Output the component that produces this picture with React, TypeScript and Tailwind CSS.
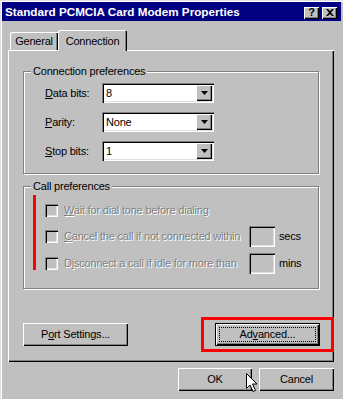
import React from 'react'

const raised =
  'bg-[#c0c0c0] shadow-[inset_1px_1px_#fff,inset_-1px_-1px_#000,inset_-2px_-2px_#808080]'
const sunken =
  'shadow-[inset_1px_1px_#808080,inset_2px_2px_#000,inset_-1px_-1px_#fff,inset_-2px_-2px_#dfdfdf]'
const etched = 'border border-[#808080] shadow-[inset_1px_1px_#fff,1px_1px_#fff]'
const disabledText = 'text-[#808080] [text-shadow:1px_1px_0_#fff]'

function DropArrow() {
  return (
    <svg width="7" height="4" viewBox="0 0 7 4">
      <polygon points="0,0 7,0 3.5,4" fill="#000" />
    </svg>
  )
}

function Select({ value }: { value: string }) {
  return (
    <div className={`flex h-[20px] w-[112px] items-center bg-white pl-[4px] ${sunken}`}>
      <span className="flex-1 leading-none">{value}</span>
      <div className={`mr-[2px] flex h-[16px] w-[16px] items-center justify-center ${raised}`}>
        <DropArrow />
      </div>
    </div>
  )
}

function Row({ label, u, value }: { label: string; u: string; value: string }) {
  return (
    <div className="flex h-[20px] items-center">
      <span className="w-[57px]">
        <u>{u}</u>
        {label}
      </span>
      <Select value={value} />
    </div>
  )
}

function Check() {
  return <div className={`h-[13px] w-[13px] shrink-0 bg-[#c0c0c0] ${sunken}`} />
}

function Group({ title, className, children }: { title: string; className?: string; children: React.ReactNode }) {
  return (
    <div className={`relative h-[103px] w-[296px] ${etched} ${className ?? ''}`}>
      <span className="absolute -top-[8px] left-[7px] bg-[#c0c0c0] px-[2px] leading-[14px]">{title}</span>
      {children}
    </div>
  )
}

function Cursor() {
  return (
    <svg className="absolute left-[246px] top-[373px]" width="12" height="19" viewBox="0 0 12 19">
      <path
        d="M0.5 0.5 L0.5 15.5 L4 12 L7 18.5 L9.5 17.5 L6.5 11 L11 11 Z"
        fill="#fff"
        stroke="#000"
        strokeWidth="1"
        strokeLinejoin="miter"
      />
    </svg>
  )
}

export default function App() {
  return (
    <div className="relative h-[399px] w-[343px] overflow-hidden bg-[#c0c0c0] px-[2px] pt-[2px] text-[11px] tracking-[-0.2px] text-black shadow-[inset_1px_1px_#dfdfdf,inset_2px_2px_#fff] font-['Liberation_Sans',Arial,sans-serif] select-none">
      {/* Title bar */}
      <div className="flex h-[19px] items-center bg-[#000080] pl-[3px] pr-[4px]">
        <span className="flex-1 text-[11.7px] font-bold tracking-normal text-white">Standard PCMCIA Card Modem Properties</span>
        <div className="mt-[2px] flex gap-[3px]">
          <div className={`flex h-[12px] w-[15px] items-center justify-center text-[11px] font-bold leading-none ${raised}`}>?</div>
          <div className={`flex h-[12px] w-[15px] items-center justify-center ${raised}`}>
            <svg width="8" height="7" viewBox="0 0 8 7">
              <path d="M0 0 L2 0 L4 2 L6 0 L8 0 L5 3.5 L8 7 L6 7 L4 5 L2 7 L0 7 L3 3.5 Z" fill="#000" />
            </svg>
          </div>
        </div>
      </div>

      {/* Tabs */}
      <div className="flex h-[29px] items-end pl-[8px]">
        <div className="flex h-[18px] w-[48px] items-center justify-center rounded-tl-[2px] shadow-[inset_1px_1px_#fff,inset_-1px_0_#000,inset_-2px_0_#808080]">
          General
        </div>
        <div className="relative z-10 -mb-px flex h-[21px] w-[69px] items-start justify-center rounded-t-[2px] bg-[#c0c0c0] pt-[3px] shadow-[inset_1px_1px_#fff,inset_-1px_0_#000,inset_-2px_0_#808080]">
          Connection
        </div>
      </div>

      {/* Panel */}
      <div className="ml-[6px] h-[312px] w-[326px] pl-[15px] pt-[21px] shadow-[inset_1px_1px_#fff,inset_-1px_-1px_#000,inset_-2px_-2px_#808080]">
        <Group title="Connection preferences">
          <div className="flex flex-col gap-[9px] pl-[21px] pt-[11px]">
            <Row u="D" label="ata bits:" value="8" />
            <Row u="P" label="arity:" value="None" />
            <Row u="S" label="top bits:" value="1" />
          </div>
        </Group>

        <Group title="Call preferences" className="mt-[12px]">
          <div className="flex pl-[9px]">
            <div className="mt-[8px] h-[75px] w-[3px] bg-[#ff0000]" />
            <div className="ml-[9px] flex flex-col pt-[17px]">
              <div className="flex h-[13px] items-center">
                <Check />
                <span className={`ml-[6px] ${disabledText}`}>
                  <u>W</u>ait for dial tone before dialing
                </span>
              </div>
              <div className="mt-[9px] flex h-[21px] items-center">
                <Check />
                <span className={`ml-[6px] w-[185px] ${disabledText}`}>
                  <u>C</u>ancel the call if not connected within
                </span>
                <div className={`h-[21px] w-[26px] bg-[#c0c0c0] ${sunken}`} />
                <span className="ml-[4px]">secs</span>
              </div>
              <div className="mt-[6px] flex h-[21px] items-center">
                <Check />
                <span className={`ml-[6px] w-[185px] ${disabledText}`}>
                  D<u>i</u>sconnect a call if idle for more than
                </span>
                <div className={`h-[21px] w-[26px] bg-[#c0c0c0] ${sunken}`} />
                <span className="ml-[4px]">mins</span>
              </div>
            </div>
          </div>
        </Group>

        <div className="mt-[34px] flex gap-[87px]">
          <div className={`flex h-[23px] w-[105px] items-center justify-center ${raised}`}>
            <span>
              P<u>o</u>rt Settings...
            </span>
          </div>
          <div className="relative">
            <div className="flex h-[23px] w-[105px] items-center justify-center border border-black bg-[#c0c0c0] p-[3px] shadow-[inset_1px_1px_#fff,inset_-1px_-1px_#000,inset_-2px_-2px_#808080]">
              <div className="flex h-full w-full items-center justify-center outline-1 outline-dotted outline-black -outline-offset-1">
                <span>
                  Ad<u>v</u>anced...
                </span>
              </div>
            </div>
            <div className="pointer-events-none absolute -bottom-[6px] -left-[14px] -right-[14px] -top-[6px] border-[3px] border-[#ff0000]" />
          </div>
        </div>
      </div>

      {/* Dialog buttons */}
      <div className="ml-[176px] mt-[6px] flex gap-[7px]">
        <div className={`flex h-[23px] w-[74px] items-center justify-center ${raised}`}>OK</div>
        <div className={`flex h-[23px] w-[75px] items-center justify-center ${raised}`}>Cancel</div>
      </div>

      <Cursor />
    </div>
  )
}
